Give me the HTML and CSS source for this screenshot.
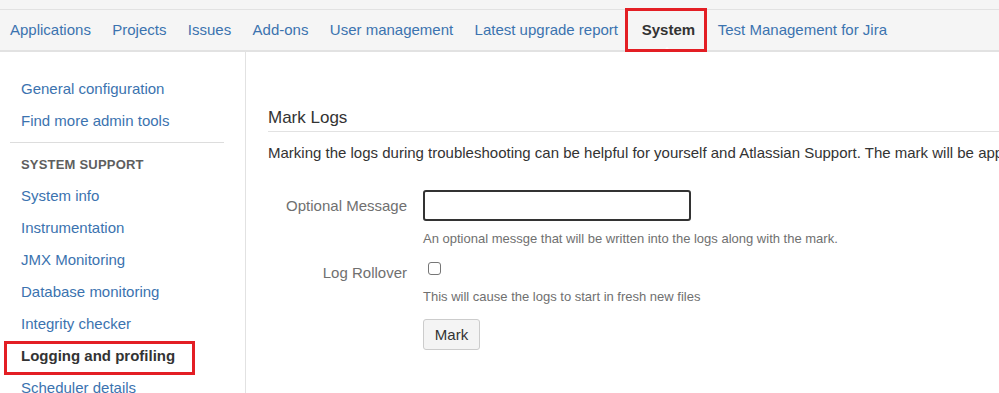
FILE: index.html
```html
<!DOCTYPE html>
<html lang="en">
<head>
    <meta charset="UTF-8">
    <meta name="viewport" content="width=device-width, initial-scale=1.0">
    <title>Logging and profiling</title>
    <link rel="stylesheet" href="styles.css">
</head>
<body>
    <div class="topbar"></div>
    <nav class="admin-nav">
        <a href="#">Applications</a>
        <a href="#">Projects</a>
        <a href="#">Issues</a>
        <a href="#">Add-ons</a>
        <a href="#">User management</a>
        <a href="#">Latest upgrade report</a>
        <a href="#" class="active highlight">System</a>
        <a href="#">Test Management for Jira</a>
    </nav>

    <div class="layout">
        <aside class="sidebar">
            <a href="#" class="side-link">General configuration</a>
            <a href="#" class="side-link">Find more admin tools</a>
            <div class="side-sep"></div>
            <div class="side-heading">System support</div>
            <a href="#" class="side-link">System info</a>
            <a href="#" class="side-link">Instrumentation</a>
            <a href="#" class="side-link">JMX Monitoring</a>
            <a href="#" class="side-link">Database monitoring</a>
            <a href="#" class="side-link">Integrity checker</a>
            <a href="#" class="side-link selected highlight">Logging and profiling</a>
            <a href="#" class="side-link">Scheduler details</a>
        </aside>

        <main class="content">
            <h2>Mark Logs</h2>
            <p class="intro">Marking the logs during troubleshooting can be helpful for yourself and Atlassian Support. The mark will be appended to all the log files.</p>

            <form action="#" class="mark-form">
                <div class="form-row">
                    <label for="msg">Optional Message</label>
                    <div class="field">
                        <input type="text" id="msg" class="text-input">
                        <div class="help">An optional messge that will be written into the logs along with the mark.</div>
                    </div>
                </div>
                <div class="form-row rollover">
                    <label for="rollover">Log Rollover</label>
                    <div class="field">
                        <div class="check-line"><input type="checkbox" id="rollover" class="check"></div>
                        <div class="help help-tight">This will cause the logs to start in fresh new files</div>
                        <button type="button" class="mark-button">Mark</button>
                    </div>
                </div>
            </form>
        </main>
    </div>
</body>
</html>
```

FILE: styles.css
```css
body {
    font-family: "Liberation Sans", Arial, sans-serif;
    font-size: 15px;
    margin: 0;
    padding: 0;
    color: #333;
    background-color: #fff;
    overflow: hidden;
}
a {
    text-decoration: none;
    color: #3b73af;
}
.topbar {
    height: 9px;
    background-color: #f5f5f5;
    border-bottom: 1px solid #e2e2e2;
}
.admin-nav {
    display: flex;
    height: 40px;
    background-color: #f5f5f5;
    border-bottom: 2px solid #e2e2e2;
    white-space: nowrap;
}
.admin-nav a {
    line-height: 40px;
    padding: 0 10.7px;
}
.admin-nav a:first-child {
    padding-left: 10px;
}
.admin-nav a.active {
    position: relative;
    color: #333;
    font-weight: bold;
    margin-left: -4px;
    padding: 0 12px 0 17px;
}
/* little pointer under the selected tab */
.admin-nav a.active::before {
    content: "";
    position: absolute;
    left: 37px;
    bottom: -2px;
    border: 5px solid transparent;
    border-bottom-color: #fff;
    border-top-width: 0;
}
.highlight {
    position: relative;
}
.highlight::after {
    content: "";
    position: absolute;
    border: 3px solid #e31e24;
    pointer-events: none;
}
.admin-nav a.highlight::after {
    top: -2px;
    bottom: -2px;
    left: 0;
    right: 0;
}
.layout {
    display: flex;
    height: 341px;
}
.sidebar {
    width: 214px;
    flex: none;
    padding: 21px 21px 0 10px;
    border-right: 1px solid #e2e2e2;
    display: flex;
    flex-direction: column;
}
.side-link {
    display: block;
    line-height: 32px;
    padding-left: 11px;
    white-space: nowrap;
}
.side-link.selected {
    color: #333;
    font-weight: bold;
}
.sidebar .highlight::after {
    top: 1px;
    bottom: -3px;
    left: -6px;
    right: 29px;
}
.side-sep {
    margin-top: 5px;
    border-top: 1px solid #ddd;
}
.side-heading {
    margin-top: 6px;
    line-height: 32px;
    padding-left: 11px;
    font-size: 13px;
    font-weight: bold;
    color: #5e5e5e;
    text-transform: uppercase;
    letter-spacing: 0.2px;
}
.side-heading + .side-link {
    margin-top: -1px;
}
.content {
    flex: 1;
    min-width: 0;
    padding: 54px 0 0 22px;
    white-space: nowrap;
}
h2 {
    margin: 0;
    font-size: 17px;
    font-weight: normal;
    line-height: 24px;
    padding-bottom: 1px;
    border-bottom: 1px solid #e2e2e2;
}
.intro {
    margin: 11px 0 0;
    line-height: 20px;
}
.mark-form {
    margin-top: 27px;
}
.form-row {
    display: grid;
    grid-template-columns: 139px 1fr;
    column-gap: 16px;
}
.form-row label {
    text-align: right;
    color: #707070;
    line-height: 31px;
}
.text-input {
    display: block;
    box-sizing: border-box;
    width: 268px;
    height: 31px;
    border: 2px solid #333;
    border-radius: 3px;
    outline: none;
    font: inherit;
    padding: 0 6px;
}
.help {
    margin-top: 9px;
    font-size: 13px;
    line-height: 18px;
    color: #707070;
}
.rollover {
    margin-top: 15px;
}
.rollover label {
    line-height: 20px;
}
.check-line {
    height: 20px;
}
.check {
    appearance: none;
    box-sizing: border-box;
    width: 13px;
    height: 13px;
    margin: -1px 0 0 5px;
    border: 1px solid #767676;
    border-radius: 3px;
    background: #fff;
    vertical-align: top;
}
.help-tight {
    margin-top: 5px;
}
.mark-button {
    display: block;
    margin-top: 13px;
    width: 57px;
    height: 31px;
    font: inherit;
    color: #333;
    background-color: #f4f4f4;
    border: 1px solid #ccc;
    border-radius: 3px;
}
```
